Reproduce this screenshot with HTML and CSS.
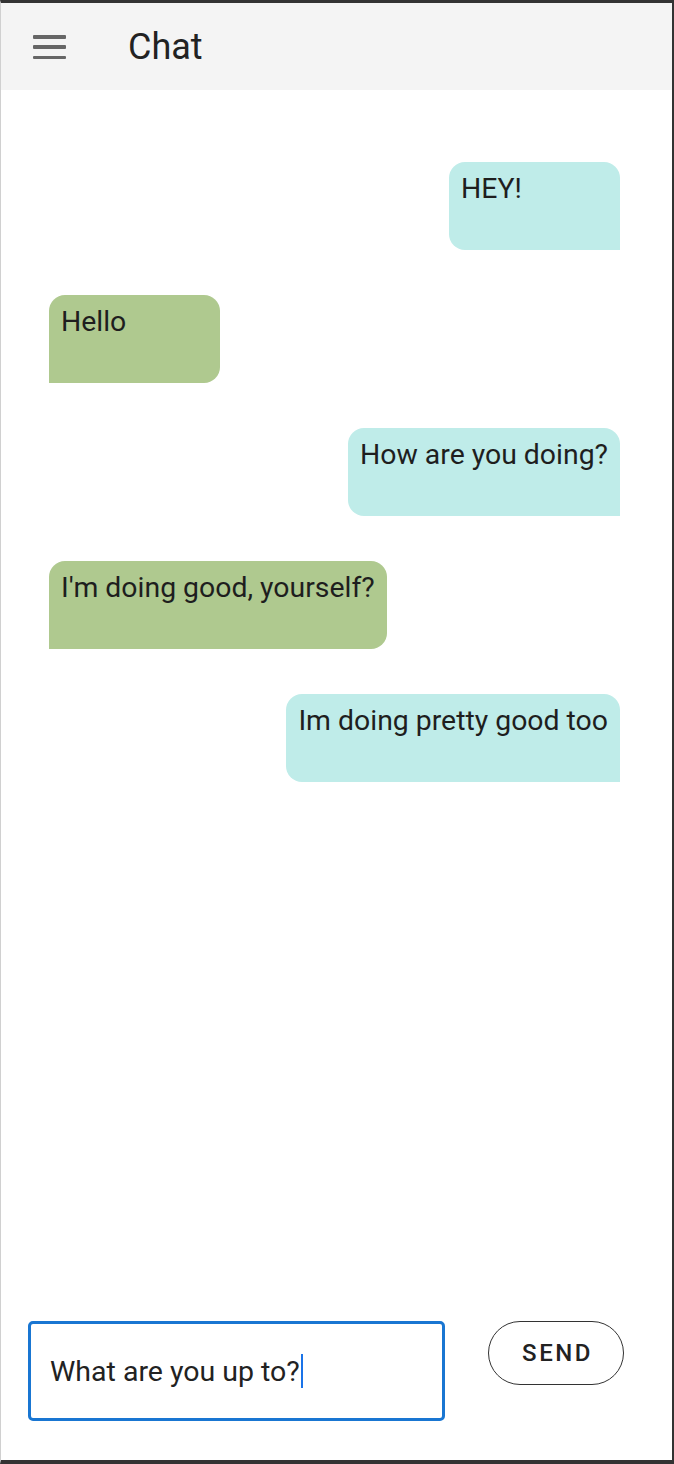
FILE: index.html
```html
<!DOCTYPE html>
<html lang="en">
<head>
<meta charset="utf-8">
<title>Chat</title>
<link rel="stylesheet" href="styles.css">
</head>
<body>
<div class="frame">
  <header class="appbar">
    <button class="menu" aria-label="Menu">
      <span class="bar"></span><span class="bar"></span><span class="bar"></span>
    </button>
    <h1 class="title">Chat</h1>
  </header>
  <main class="messages">
    <div class="bubble sent">HEY!</div>
    <div class="bubble received">Hello</div>
    <div class="bubble sent">How are you doing?</div>
    <div class="bubble received">I'm doing good, yourself?</div>
    <div class="bubble sent">Im doing pretty good too</div>
  </main>
  <footer class="composer">
    <div class="field" role="textbox">What are you up to?<span class="caret"></span></div>
    <button class="send">SEND</button>
  </footer>
</div>
</body>
</html>
```
FILE: styles.css
```css
* { box-sizing: border-box; }
html, body { margin: 0; padding: 0; background: #fff; }
body { font-family: Roboto, "Noto Sans", Arial, sans-serif; color: #222; }

.frame {
  width: 674px;
  height: 1464px;
  border-top: 3px solid #333;
  border-right: 2px solid #333;
  border-bottom: 4px solid #333;
  border-left: 1px solid #d0d0d0;
  display: flex;
  flex-direction: column;
  background: #fff;
}

.appbar {
  height: 87px;
  background: #f4f4f4;
  display: flex;
  align-items: center;
  padding-left: 32px;
  flex: none;
}
.menu {
  width: 33px;
  height: 24px;
  padding: 0;
  border: 0;
  background: transparent;
  display: flex;
  flex-direction: column;
  justify-content: space-between;
  margin-top: 1px;
}
.menu .bar {
  display: block;
  height: 3.5px;
  background: #666;
  border-radius: 1px;
}
.title {
  margin: 0 0 0 62px;
  font-size: 36px;
  font-weight: 400;
  color: #222;
}

.messages {
  flex: 1;
  display: flex;
  flex-direction: column;
  gap: 45px;
  padding: 72px 52px 0 48px;
}
.bubble {
  min-width: 171px;
  min-height: 88px;
  padding: 10px 12px 10px 12px;
  font-size: 28.4px;
  line-height: 1.2;
  color: #1e1e1e;
  border-radius: 16px;
}
.sent {
  align-self: flex-end;
  background: #bfece9;
  border-bottom-right-radius: 0;
}
.received {
  align-self: flex-start;
  background: #afc98f;
  border-bottom-left-radius: 0;
}

.composer {
  flex: none;
  display: flex;
  align-items: flex-start;
  padding: 0 48px 39px 27px;
}
.field {
  width: 417px;
  height: 100px;
  border: 3px solid #1976d2;
  border-radius: 5px;
  padding: 0 0 0 19px;
  display: flex;
  align-items: center;
  font-size: 28.5px;
  color: #222;
}
.caret {
  display: inline-block;
  width: 2px;
  height: 34px;
  background: #1a73e8;
  margin-left: 1px;
}
.send {
  margin-left: auto;
  width: 136px;
  height: 64px;
  border: 1.5px solid #333;
  border-radius: 32px;
  background: #fff;
  font-family: Roboto, "Noto Sans", Arial, sans-serif;
  font-size: 24px;
  font-weight: 500;
  letter-spacing: 2.5px;
  color: #222;
  padding: 0 0 0 3px;
}
```
